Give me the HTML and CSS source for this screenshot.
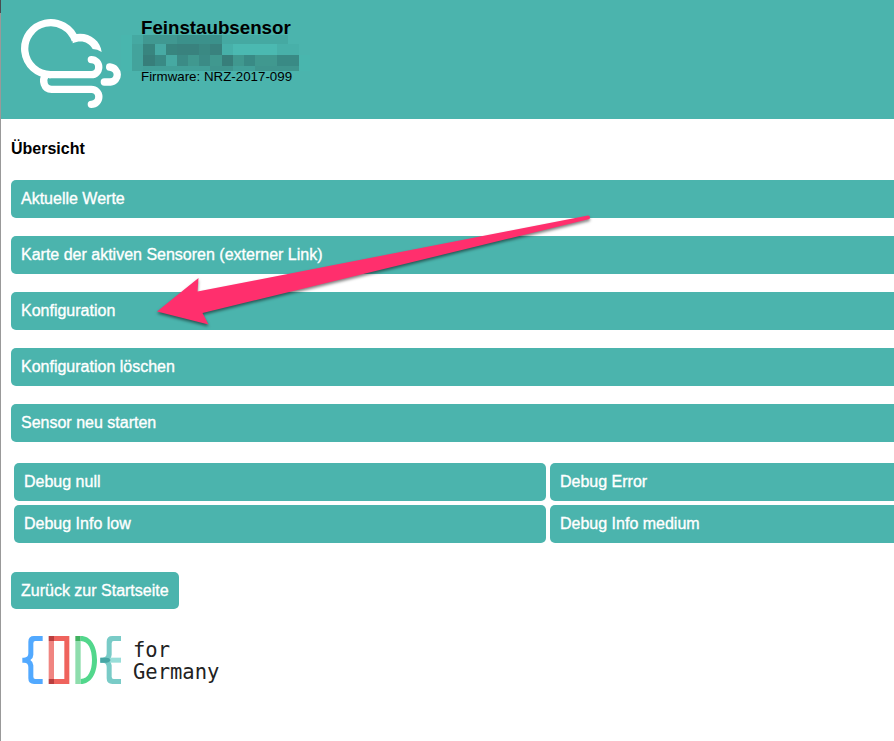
FILE: index.html
```html
<!DOCTYPE html>
<html lang="de">
<head>
<meta charset="utf-8">
<title>Feinstaubsensor</title>
<link rel="stylesheet" href="styles.css">
</head>
<body>
<header class="header">
  <svg class="cloud" viewBox="60 54 306 273" fill="none" stroke="#fff" stroke-width="22" stroke-linecap="round">
    <path stroke-linecap="butt" d="M226 121A78 78 0 1 0 152 224"/>
    <path fill="#fff" stroke="none" d="M218 130L219 104Q230 101 240 101C273 101 302 124 305 156Q292 147 278 147C266 125 242 118 218 130Z"/>
    <path d="M152 224H273.500A22.500 22.500 0 0 0 274 179"/>
    <path d="M136 226C126 240 131 268 155 268H274A22.500 22.500 0 0 1 274 313"/>
    <path d="M329 201C359 204 359 243 331 246H313"/>
  </svg>
  <div class="device">
    <h1>Feinstaubsensor</h1>
    <svg class="mosaic" viewBox="17 75 566 108" preserveAspectRatio="none" shape-rendering="crispEdges">
      <path fill="#49b6ae" d="M17 75h34v108H17zM549 135h34v48h-34z"/>
      <path fill="#45a9a2" d="M51 75h33v27H51zM318 75h199v27H318z"/>
      <path fill="#43a39c" d="M51 102h33v81H51z"/>
      <path fill="#409891" d="M84 75h102v27H84z"/>
      <path fill="#3b918b" d="M186 75h132v27H186z"/>
      <path fill="#38857f" d="M84 102h36v33H84zM153 102h33v33h-33z"/>
      <path fill="#47aaa4" d="M120 102h33v33h-33z"/>
      <path fill="#39827e" d="M186 102h66v33h-66zM285 102h33v33h-33z"/>
      <path fill="#3a8983" d="M252 102h33v33h-33z"/>
      <path fill="#47b0a9" d="M318 102h33v33h-33z"/>
      <path fill="#4bb9b1" d="M351 102h133v33H351z"/>
      <path fill="#48b0a9" d="M484 102h65v33h-65z"/>
      <path fill="#377e7a" d="M84 135h36v33H84zM318 135h33v33h-33z"/>
      <path fill="#398a85" d="M120 135h33v33h-33zM385 135h33v33h-33zM484 135h65v33h-65z"/>
      <path fill="#46a9a2" d="M153 135h33v33h-33z"/>
      <path fill="#3b8b86" d="M186 135h33v33h-33zM252 135h33v33h-33z"/>
      <path fill="#40988f" d="M219 135h33v33h-33zM285 135h33v33h-33zM351 135h34v33h-34zM418 135h66v33h-66z"/>
      <path fill="#42a099" d="M84 168h201v15H84zM351 168h67v15h-67z"/>
      <path fill="#3f958e" d="M285 168h66v15h-66zM418 168h131v15H418z"/>
    </svg>
    <p>Firmware: NRZ-2017-099</p>
  </div>
</header>
<main class="content">
  <h2>Übersicht</h2>
  <nav class="menu">
    <a class="button wide">Aktuelle Werte</a>
    <a class="button wide">Karte der aktiven Sensoren (externer Link)</a>
    <a class="button wide">Konfiguration</a>
    <a class="button wide">Konfiguration löschen</a>
    <a class="button wide">Sensor neu starten</a>
  </nav>
  <div class="debug">
    <a class="button">Debug null</a>
    <a class="button wide">Debug Error</a>
    <a class="button">Debug Info low</a>
    <a class="button wide">Debug Info medium</a>
  </div>
  <a class="button back">Zurück zur Startseite</a>
</main>
<footer class="brand">
  <svg class="code" viewBox="35 33 300 144">
    <path fill="#52a9ff" d="M97 33V48H75Q69 48 69 55V89Q69 99 60 105Q69 111 69 121V155Q69 162 75 162H97V177H71Q54 177 54 160V126Q54 113 41 113H36V98H41Q54 98 54 85V50Q54 33 71 33Z"/>
    <path fill="#f08581" d="M115 48h16v114h-16z"/>
    <path fill="#ef635d" d="M131 33h46v144h-46v-15h31V48h-31z"/>
    <path fill="#b93e3e" d="M115 33h16v15h-16zM115 162h16v15h-16z"/>
    <path fill="#8eddac" d="M195 48h16v129h-16z"/>
    <path fill="#40b15f" d="M195 33h16v15h-16z"/>
    <path fill="#52d78c" d="M211 33C243 33 260 65 260 105C260 145 243 177 211 177V162C234 161 245 137 245 105C245 73 234 49 211 48Z"/>
    <path fill="#79cbc7" d="M332 33V48H310Q304 48 304 55V89Q304 99 296 105Q304 111 304 121V155Q304 162 310 162H332V177H306Q289 177 289 160V126Q289 113 276 113H270V98H276Q289 98 289 85V50Q289 33 306 33Z"/>
    <path fill="#98ded9" d="M299 98h33v15h-33z"/>
    <path fill="#47a6a5" d="M270 98H289Q297 98 301 105Q297 113 289 113H270Z"/>
  </svg>
  <div class="brand-name">for<br>Germany</div>
</footer>
<svg class="arrow" viewBox="150 205 450 130">
  <path fill="#ff2f6d" d="M157 311.500L198.500 278L197.500 291.500L588 215.500Q591 216 589.500 219L202.500 313L208.500 324.500Z"/>
</svg>
</body>
</html>
```
FILE: styles.css
```css
* { box-sizing: border-box; }

html { overflow: hidden; background: #fff; }

body {
  position: relative;
  height: 741px;
  margin: 0;
  overflow: hidden;
  border-left: 1px solid #999;
  border-image: linear-gradient(#494c50 14px, #999 14px) 1;
  border-width: 0 0 0 1px;
  font: 16px/18px "Liberation Sans", Arial, sans-serif;
  color: #000;
}

.header {
  display: flex;
  height: 119px;
  padding: 18px 0 0 19px;
  background: #4bb4ad;
}

.cloud { flex: none; width: 102px; height: 91px; }

.device { padding-left: 19px; }

h1 { margin: 0; font-size: 18.72px; line-height: 19px; height: 17px; }

.mosaic {
  display: block;
  width: 189px;
  height: 36px;
  margin-left: -20px;
}

.device p { margin: -2px 0 0; font-size: 13.333px; line-height: 16px; }

.content { padding: 21px 0 0 10px; }

h2 { margin: 0 0 22px; font-size: 16px; line-height: 18px; }

.menu { display: flex; flex-direction: column; gap: 18px; }

.button {
  display: block;
  height: 38px;
  padding: 10px;
  border-radius: 5px;
  background: #4bb4ad;
  color: #fff;
  -webkit-text-stroke: 0.35px #fff;
}

.wide { border-radius: 5px 0 0 5px; }

.debug {
  display: grid;
  grid-template-columns: 532px 1fr;
  gap: 4px;
  margin: 21px 0 29px 3px;
}

.back { width: 168px; height: 37px; white-space: nowrap; }

.brand { display: flex; padding: 27px 0 0 20.6px; }

.code { flex: none; width: 100px; height: 48px; }

.brand-name {
  padding: 3px 0 0 11.4px;
  color: #222;
  font: 20.5px/22px "DejaVu Sans Mono", monospace;
}

.arrow {
  position: absolute;
  left: 149px;
  top: 205px;
  width: 450px;
  height: 130px;
  overflow: visible;
  filter: drop-shadow(0 2px 1.5px rgba(0, 0, 0, 0.5));
}
```
